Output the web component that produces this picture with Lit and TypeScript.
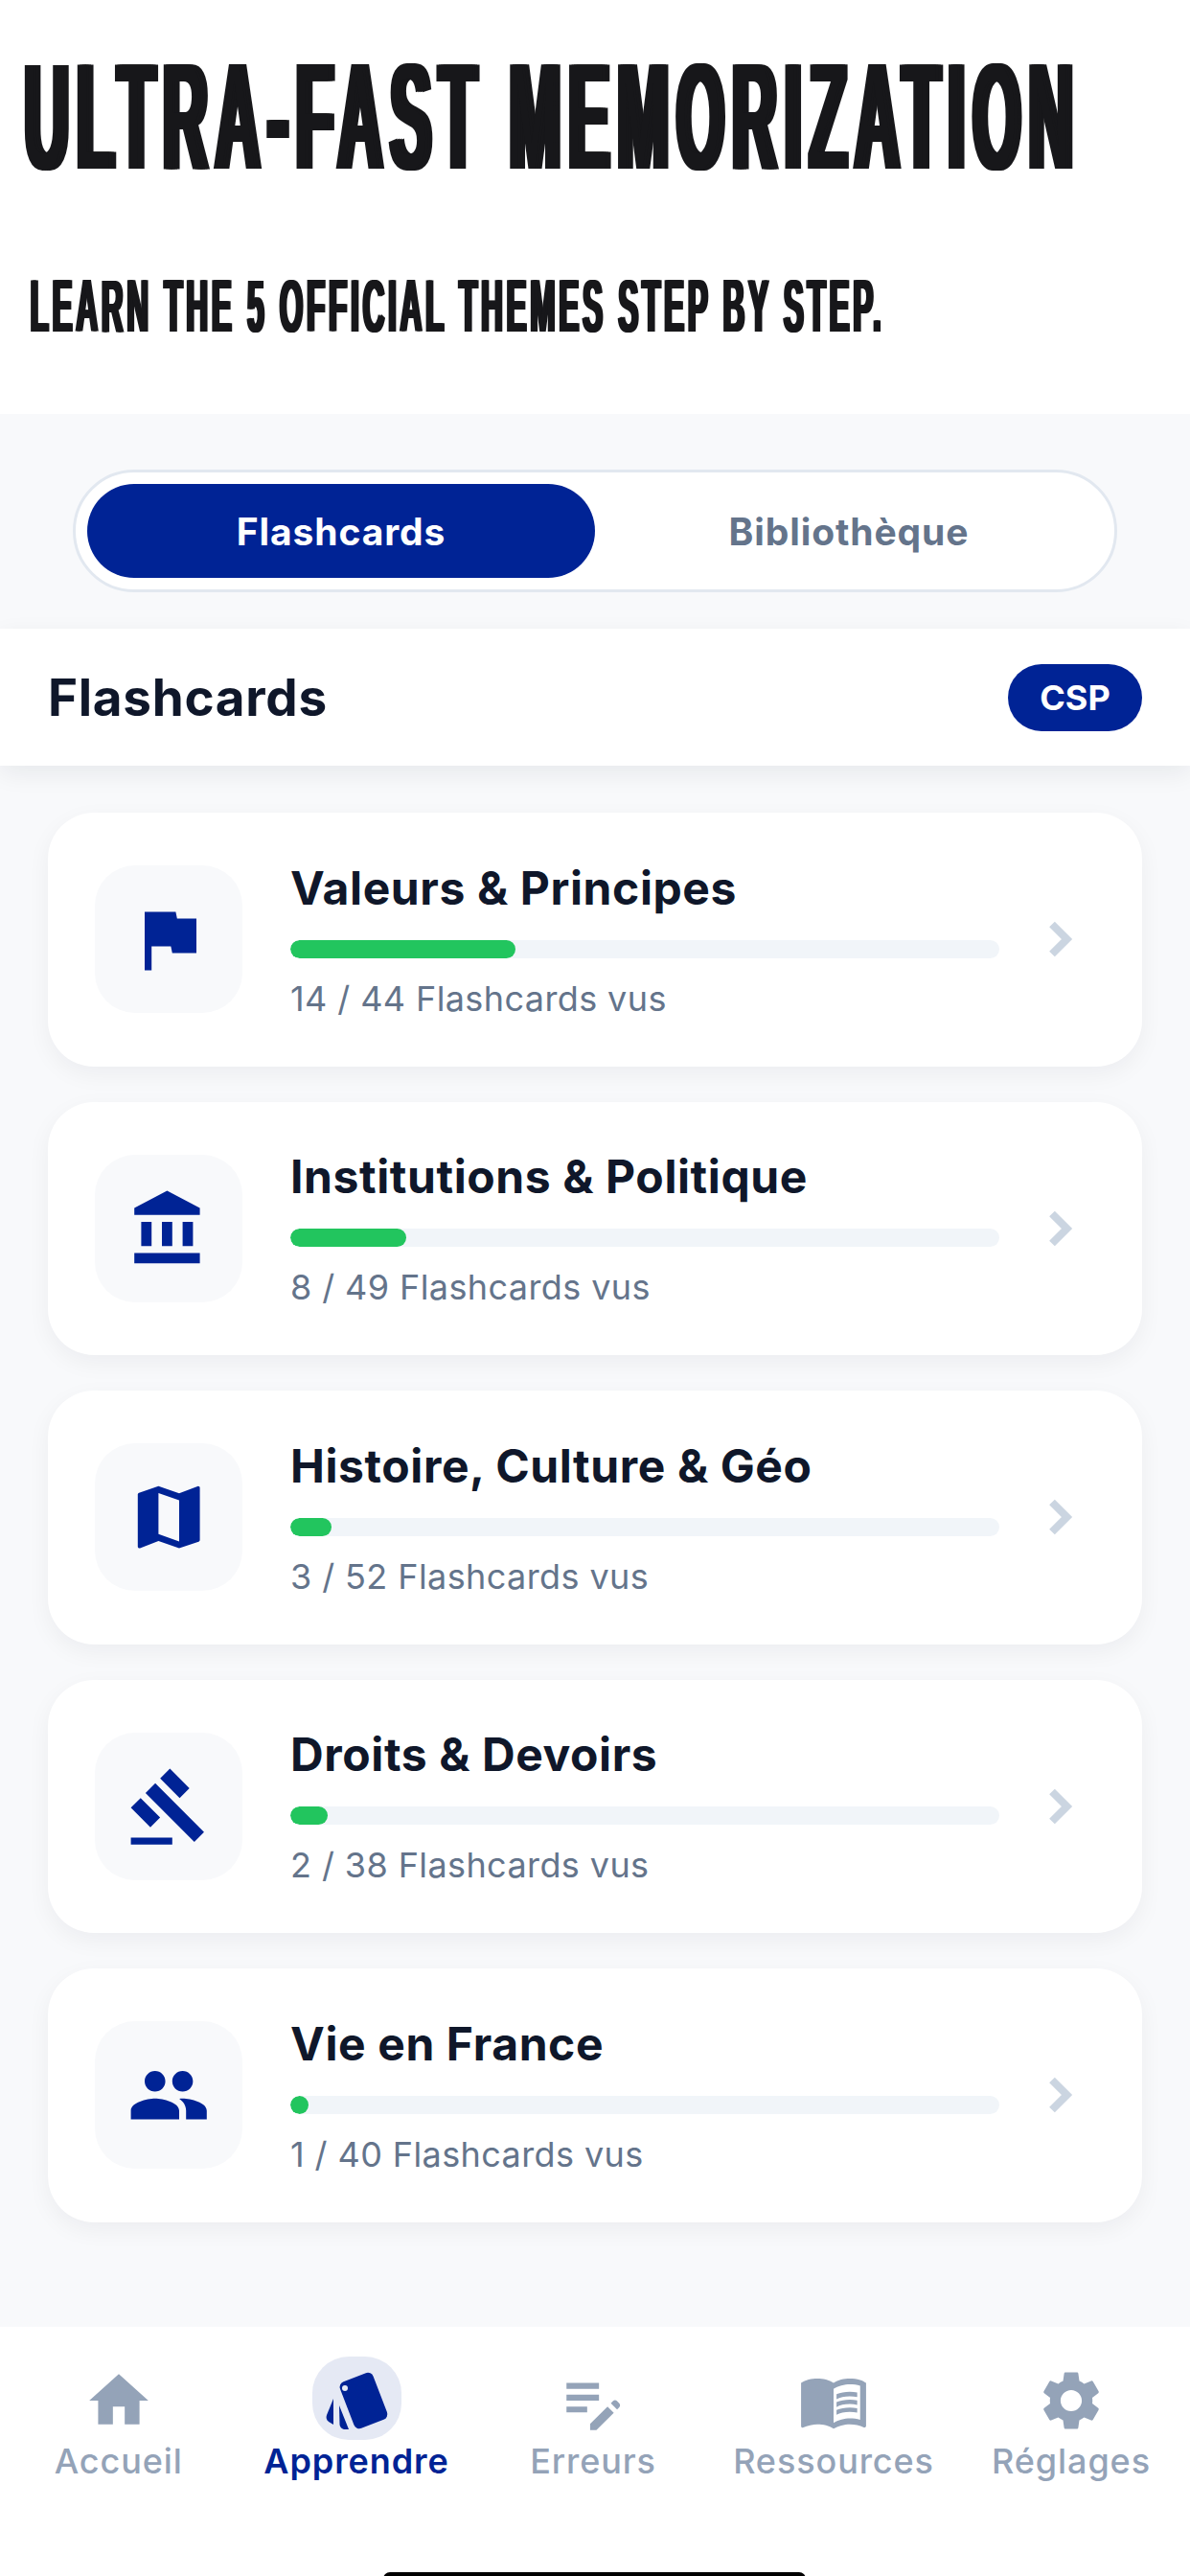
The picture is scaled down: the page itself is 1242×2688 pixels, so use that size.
import { LitElement, html, css, svg } from "lit";
import { customElement } from "lit/decorators.js";

const ICONS: Record<string, ReturnType<typeof svg>> = {
  flag: svg`<path d="M14.4 6L14 4H5v17h2v-7h5.6l.4 2h7V6z"/>`,
  bank: svg`<path d="M4 10v7h3v-7H4zm6 0v7h3v-7h-3zM2 22h19v-3H2v3zm14-12v7h3v-7h-3zm-4.5-9L2 6v2h19V6l-9.5-5z"/>`,
  map: svg`<path d="M20.5 3l-.16.03L15 5.1 9 3 3.36 4.9c-.21.07-.36.25-.36.48V20.5c0 .28.22.5.5.5l.16-.03L9 18.9l6 2.1 5.64-1.9c.21-.07.36-.25.36-.48V3.5c0-.28-.22-.5-.5-.5zM15 19l-6-2.11V5l6 2.11V19z"/>`,
  gavel: svg`<path d="M1 21h12v2H1zM5.245 8.07l2.83-2.827 14.14 14.142-2.828 2.828zM12.317 1l5.657 5.656-2.83 2.83-5.654-5.66zM3.825 9.485l5.657 5.657-2.828 2.828-5.657-5.657z"/>`,
  people: svg`<path d="M16 11c1.66 0 2.99-1.34 2.99-3S17.66 5 16 5c-1.66 0-3 1.34-3 3s1.34 3 3 3zm-8 0c1.66 0 2.99-1.34 2.99-3S9.66 5 8 5C6.34 5 5 6.34 5 8s1.34 3 3 3zm0 2c-2.33 0-7 1.17-7 3.5V19h14v-2.5c0-2.33-4.67-3.5-7-3.5zm8 0c-.29 0-.62.02-.97.05 1.16.84 1.97 1.97 1.97 3.45V19h6v-2.5c0-2.33-4.67-3.5-7-3.5z"/>`,
  home: svg`<path d="M10 20v-6h4v6h5v-8h3L12 3 2 12h3v8z"/>`,
  note: svg`<path d="M3 10h11v2H3zM3 8h11V6H3zM3 16h7v-2H3zM18.01 12.87l.71-.71c.39-.39 1.02-.39 1.41 0l.71.71c.39.39.39 1.02 0 1.41l-.71.71zM16.89 13.99L11 19.88V22h2.12l5.89-5.89z"/>`,
  book: svg`<path d="M21 5c-1.11-.35-2.33-.5-3.5-.5-1.95 0-4.05.4-5.5 1.5-1.45-1.1-3.55-1.5-5.5-1.5S2.45 4.9 1 6v14.65c0 .25.25.5.5.5.1 0 .15-.05.25-.05C3.1 20.45 5.05 20 6.5 20c1.95 0 4.05.4 5.5 1.5 1.35-.85 3.8-1.5 5.5-1.5 1.65 0 3.35.3 4.75 1.05.1.05.15.05.25.05.25 0 .5-.25.5-.5V6c-.6-.45-1.25-.75-2-1zm0 13.5c-1.1-.35-2.3-.5-3.5-.5-1.7 0-4.15.65-5.5 1.5V8c1.35-.85 3.8-1.5 5.5-1.5 1.2 0 2.4.15 3.5.5v11.5z"/><path d="M17.5 10.5c.88 0 1.73.09 2.5.26V9.24c-.79-.15-1.64-.24-2.5-.24-1.7 0-3.24.29-4.5.83v1.66c1.13-.64 2.7-.99 4.5-.99zM13 12.49v1.66c1.13-.64 2.7-.99 4.5-.99.88 0 1.73.09 2.5.26V11.9c-.79-.15-1.64-.24-2.5-.24-1.7 0-3.24.3-4.5.83zM17.5 14.33c-1.7 0-3.24.29-4.5.83v1.66c1.13-.64 2.7-.99 4.5-.99.88 0 1.73.09 2.5.26v-1.52c-.79-.16-1.64-.24-2.5-.24z"/>`,
  gear: svg`<path d="M19.14 12.94c.04-.3.06-.61.06-.94 0-.32-.02-.64-.07-.94l2.03-1.58c.18-.14.23-.41.12-.61l-1.92-3.32c-.12-.22-.37-.29-.59-.22l-2.39.96c-.5-.38-1.03-.7-1.62-.94l-.36-2.54c-.04-.24-.24-.41-.48-.41h-3.84c-.24 0-.43.17-.47.41l-.36 2.54c-.59.24-1.13.57-1.62.94l-2.39-.96c-.22-.08-.47 0-.59.22L2.74 8.87c-.12.21-.08.47.12.61l2.03 1.58c-.05.3-.09.63-.09.94s.02.64.07.94l-2.03 1.58c-.18.14-.23.41-.12.61l1.92 3.32c.12.22.37.29.59.22l2.39-.96c.5.38 1.03.7 1.62.94l.36 2.54c.05.24.24.41.48.41h3.84c.24 0 .44-.17.47-.41l.36-2.54c.59-.24 1.13-.56 1.62-.94l2.39.96c.22.08.47 0 .59-.22l1.92-3.32c.12-.22.07-.47-.12-.61l-2.01-1.58zM12 15.6c-1.98 0-3.6-1.62-3.6-3.6s1.62-3.6 3.6-3.6 3.6 1.62 3.6 3.6-1.62 3.6-3.6 3.6z"/>`,
};

const THEMES = [
  { name: "Valeurs & Principes", seen: 14, total: 44, icon: "flag" },
  { name: "Institutions & Politique", seen: 8, total: 49, icon: "bank" },
  { name: "Histoire, Culture & Géo", seen: 3, total: 52, icon: "map" },
  { name: "Droits & Devoirs", seen: 2, total: 38, icon: "gavel" },
  { name: "Vie en France", seen: 1, total: 40, icon: "people" },
];

const TABS = [
  { label: "Accueil", icon: "home" },
  { label: "Apprendre", icon: "" },
  { label: "Erreurs", icon: "note" },
  { label: "Ressources", icon: "book" },
  { label: "Réglages", icon: "gear" },
];

@customElement("app-root")
export class AppRoot extends LitElement {
  static styles = css`
    :host {
      display: flex;
      flex-direction: column;
      position: relative;
      width: 1242px;
      height: 2688px;
      overflow: hidden;
      background: #f8f9fb;
      font-family: Inter, "Liberation Sans", sans-serif;
      color: #0f172a;
    }
    .hero {
      height: 432px;
      flex: none;
      background: #fff;
      overflow: hidden;
      color: #17171a;
      font-family: "Liberation Sans", Arial, sans-serif;
      font-weight: 700;
      white-space: nowrap;
    }
    .headline,
    .subline {
      display: block;
      width: max-content;
      transform-origin: left top;
    }
    .headline {
      font-size: 157px;
      line-height: 157px;
      margin: 43px 0 0 22px;
      letter-spacing: 20px;
      transform: scaleX(0.409);
      text-shadow: 6px 0 #17171a, 12px 0 #17171a, 18px 0 #17171a;
    }
    .subline {
      font-size: 78px;
      line-height: 78px;
      margin: 80px 0 0 30px;
      letter-spacing: 9.5px;
      transform: scaleX(0.4023);
      text-shadow: 4px 0 #17171a, 8px 0 #17171a;
    }
    .segment {
      flex: none;
      display: flex;
      height: 128px;
      box-sizing: border-box;
      margin: 58px 76px 0;
      padding: 12px;
      background: #fff;
      border: 3px solid #e2e8f0;
      border-radius: 64px;
    }
    .seg {
      flex: 1;
      display: flex;
      align-items: center;
      justify-content: center;
      border-radius: 49px;
      font-size: 39px;
      font-weight: 700;
      letter-spacing: 0.9px;
      color: #64748b;
    }
    .seg.on {
      background: #002395;
      color: #fff;
    }
    .bar {
      flex: none;
      display: flex;
      align-items: center;
      justify-content: space-between;
      height: 143px;
      box-sizing: border-box;
      margin-top: 38px;
      padding: 0 50px;
      background: #fff;
      box-shadow: 0 8px 24px rgba(15, 23, 42, 0.07);
      position: relative;
    }
    .bar h1 {
      margin: 0;
      font-size: 53px;
      font-weight: 700;
      letter-spacing: 0.7px;
    }
    .badge {
      display: flex;
      align-items: center;
      justify-content: center;
      width: 140px;
      height: 70px;
      border-radius: 35px;
      background: #002395;
      color: #fff;
      font-size: 36px;
      font-weight: 700;
    }
    .list {
      flex: 1;
      display: flex;
      flex-direction: column;
      gap: 37px;
      padding: 49px 50px 0;
    }
    .card {
      display: flex;
      align-items: center;
      height: 264.5px;
      box-sizing: border-box;
      padding-left: 49px;
      background: #fff;
      border-radius: 48px;
      box-shadow: 0 8px 24px rgba(15, 23, 42, 0.05);
    }
    .ico {
      flex: none;
      width: 154px;
      height: 154px;
      border-radius: 42px;
      background: #f8f9fb;
      display: flex;
      align-items: center;
      justify-content: center;
    }
    .ico svg {
      width: 86.4px;
      height: 86.4px;
      fill: #002395;
    }
    .body {
      flex: none;
      width: 740px;
      margin-left: 50px;
      display: flex;
      flex-direction: column;
    }
    .name {
      font-size: 48px;
      font-weight: 700;
      line-height: 60px;
      letter-spacing: 0.6px;
    }
    .track {
      height: 19px;
      margin-top: 24px;
      border-radius: 10px;
      background: #f1f5f9;
      overflow: hidden;
    }
    .fill {
      height: 100%;
      min-width: 19px;
      border-radius: 10px;
      background: #22c55e;
    }
    .count {
      margin-top: 20px;
      font-size: 36px;
      line-height: 44px;
      letter-spacing: 0.4px;
      color: #64748b;
    }
    .chev {
      flex: none;
      width: 28px;
      height: 44px;
      margin-left: 50px;
      fill: none;
      stroke: #cbd5e1;
      stroke-width: 8;
    }
    .nav {
      flex: none;
      display: grid;
      grid-template-columns: 247.5px 249px 245px 257px 239px;
      height: 260px;
      box-sizing: border-box;
      padding-top: 31px;
      background: #fff;
    }
    .tab {
      display: flex;
      flex-direction: column;
      align-items: center;
      font-size: 36px;
      font-weight: 500;
      letter-spacing: 0.9px;
      color: #94a3b8;
    }
    .tab.on {
      color: #002395;
      font-weight: 600;
    }
    .tab-ico {
      width: 93px;
      height: 87px;
      display: flex;
      align-items: center;
      justify-content: center;
      border-radius: 38px;
    }
    .tab-ico svg {
      width: 74px;
      height: 74px;
      margin-top: 5px;
      fill: #94a3b8;
    }
    .tab.on .tab-ico {
      background: #e5e9f4;
    }
    .tab.on .tab-ico svg {
      width: 93px;
      height: 87px;
      margin-top: 0;
      fill: #002395;
    }
    .hole {
      fill: #e5e9f4;
    }
    .tab span {
      line-height: 44px;
    }
    .indicator {
      position: absolute;
      left: 400px;
      bottom: -10px;
      width: 441px;
      height: 14px;
      border-radius: 7px;
      background: #000;
    }
  `;

  render() {
    return html`
      <header class="hero">
        <div class="headline">ULTRA-FAST MEMORIZATION</div>
        <div class="subline">LEARN THE 5 OFFICIAL THEMES STEP BY STEP.</div>
      </header>
      <div class="segment">
        <div class="seg on">Flashcards</div>
        <div class="seg">Bibliothèque</div>
      </div>
      <div class="bar">
        <h1>Flashcards</h1>
        <div class="badge">CSP</div>
      </div>
      <div class="list">
        ${THEMES.map(
          (t) => html`
            <div class="card">
              <div class="ico"><svg viewBox="0 0 24 24">${ICONS[t.icon]}</svg></div>
              <div class="body">
                <div class="name">${t.name}</div>
                <div class="track">
                  <div class="fill" style="width:${(t.seen / t.total) * 100}%"></div>
                </div>
                <div class="count">${t.seen} / ${t.total} Flashcards vus</div>
              </div>
              <svg class="chev" viewBox="0 0 28 44"><path d="M5 6.500L20.500 22 5 37.500" /></svg>
            </div>
          `
        )}
      </div>
      <nav class="nav">
        ${TABS.map(
          (t) => html`
            <div class="tab ${t.icon ? "" : "on"}">
              <div class="tab-ico">
                ${t.icon
                  ? html`<svg viewBox="0 0 24 24">${ICONS[t.icon]}</svg>`
                  : html`<svg viewBox="0 0 93 87">
                      <rect x="35" y="20" width="37" height="52" rx="6" transform="rotate(-21 53.5 46)" />
                      <circle class="hole" cx="34" cy="33" r="3" />
                      <path d="M22 44V71L17 68Q13.500 65 15 61z" />
                      <path d="M28 51L38 76H33Q29 75 28.500 71z" />
                    </svg>`}
              </div>
              <span>${t.label}</span>
            </div>
          `
        )}
      </nav>
      <div class="indicator"></div>
    `;
  }
}
